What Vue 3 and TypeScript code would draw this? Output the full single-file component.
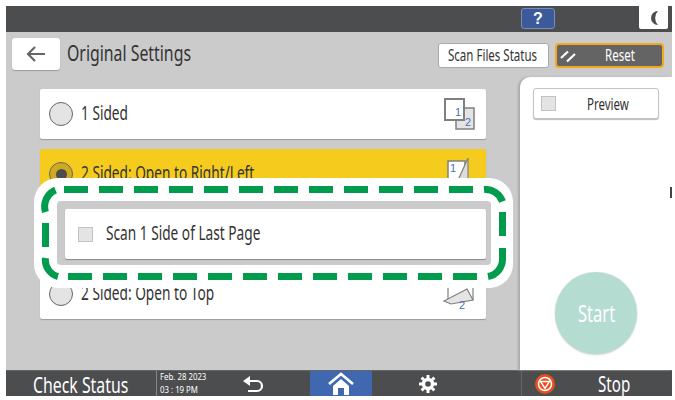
<script setup lang="ts">
interface Original {
  label: string
  selected: boolean
  icon: string
}

const originals: Original[] = [
  { label: '1 Sided', selected: false, icon: 'one' },
  { label: '2 Sided: Open to Right/Left', selected: true, icon: 'book' },
  { label: '', selected: false, icon: '' },
  { label: '2 Sided: Open to Top', selected: false, icon: 'top' },
]

// dashes of the green callout, in page coordinates
const dashes =
  'M64 189.5h24M99 189.5h24M134 189.5h24M169 189.5h24M204 189.5h24M239 189.5h24M274 189.5h24M309 189.5h24M344 189.5h24M379 189.5h24M414 189.5h24M449 189.5h24' +
  'M484 189.5a18 18 0 0 1 18.5 12M502.5 212v24M502.5 248v11a17.500 17.500 0 0 1-14.500 17.500' +
  'M477 276.500h-24M442 276.500h-24M407 276.500h-24M372 276.500h-24M337 276.500h-24M302 276.500h-24M267 276.500h-24M232 276.500h-24M197 276.500h-24M162 276.500h-24M127 276.500h-24M92 276.500h-24' +
  'M58 276.500a17 17 0 0 1-12.500-18.500M45.500 247v-24M45.500 212a18 18 0 0 1 10-22'
</script>

<template>
  <div class="screen">
    <div class="topbar">
      <button class="help">?</button>
      <button class="sleep">
        <svg width="14" height="16" viewBox="0 0 14 16">
          <path d="M11 1A7 7 0 0 0 11 15A10 10 0 0 1 11 1z" fill="#4c4d4f" />
        </svg>
      </button>
    </div>

    <div class="main">
      <div class="head">
        <button class="back">
          <svg width="20" height="16" viewBox="0 0 20 16">
            <path d="M9 1L2 8l7 7M2 8h17" fill="none" stroke="#666" stroke-width="2.200" />
          </svg>
        </button>
        <span class="title"><span class="cond">Original Settings</span></span>
        <button class="scan"><span class="cond">Scan Files Status</span></button>
        <button class="reset">
          <svg width="16" height="14" viewBox="0 0 16 14">
            <path d="M1 9L8 2.500M7 12.500L15 5" stroke="#fff" stroke-width="2.200" fill="none" />
          </svg>
          <span class="reset-label"><span class="cond">Reset</span></span>
        </button>
      </div>

      <div class="body">
        <div class="list">
          <div
            v-for="(o, i) in originals"
            :key="i"
            class="row"
            :class="{ selected: o.selected, blank: !o.label }"
          >
            <template v-if="o.label">
              <span class="radio"><span v-if="o.selected" class="dot"></span></span>
              <span class="row-label"><span class="cond">{{ o.label }}</span></span>
              <svg v-if="o.icon === 'one'" class="paper" width="32" height="32" viewBox="0 0 32 32">
                <rect x="13" y="10" width="18" height="21" fill="#e4e4e4" stroke="#808080" stroke-width="1.500" />
                <rect x="2" y="1" width="19" height="21" fill="#fff" stroke="#808080" stroke-width="2" />
                <text x="15" y="18" class="num">1</text>
                <text x="25" y="28" class="num">2</text>
              </svg>
              <svg v-else-if="o.icon === 'book'" class="paper" width="32" height="32" viewBox="0 0 32 32">
                <rect x="5" y="3" width="17" height="26" fill="#fff" stroke="#808080" stroke-width="1.500" />
                <path d="M25 0L12 29h13z" fill="#ddd" stroke="#808080" stroke-width="1.200" />
                <text x="10" y="14" class="num">1</text>
              </svg>
              <svg v-else class="paper" width="32" height="32" viewBox="0 0 32 32">
                <path d="M5 9v14M30 9v13" stroke="#808080" stroke-width="1.200" fill="none" />
                <path d="M1 23L24 11l6 11-22 4z" fill="#e4e4e4" stroke="#808080" stroke-width="1.200" />
                <text x="19" y="31" class="num">2</text>
              </svg>
            </template>
          </div>
        </div>

        <div class="side">
          <button class="preview">
            <span class="check"></span>
            <span class="preview-label"><span class="cond">Preview</span></span>
          </button>
          <span class="edge-mark"></span>
          <button class="start"><span class="cond">Start</span></button>
        </div>
      </div>

      <!-- callout over the list -->
      <div class="callout">
        <div class="callout-inner">
          <div class="option">
            <span class="check"></span>
            <span class="option-label"><span class="cond">Scan 1 Side of Last Page</span></span>
          </div>
        </div>
      </div>
      <svg class="dash" width="666" height="338" viewBox="6 32 666 338">
        <path :d="dashes" fill="none" stroke="#009b4c" stroke-width="7" />
      </svg>
    </div>

    <div class="footer">
      <div class="status"><span class="cond">Check Status</span></div>
      <div class="date">
        <span class="cond">Feb. 28 2023</span>
        <span class="cond">03 : 19 PM</span>
      </div>
      <div class="cell back-cell">
        <svg width="22" height="18" viewBox="0 0 22 18">
          <path d="M8 1L1 6l7 5z" fill="#fff" />
          <path d="M6 6h9a4.500 4.500 0 0 1 0 10H6" fill="none" stroke="#fff" stroke-width="2.200" />
        </svg>
      </div>
      <div class="cell home">
        <svg width="26" height="24" viewBox="0 0 26 24">
          <path d="M1 12L13 2l12 10" fill="none" stroke="#fff" stroke-width="2.600" />
          <path d="M5 14l8-7 8 7v9h-5v-7h-6v7H5z" fill="#fff" />
        </svg>
      </div>
      <div class="cell gear">
        <svg width="18" height="18" viewBox="0 0 18 18">
          <circle cx="9" cy="9" r="4.500" fill="none" stroke="#fff" stroke-width="3.400" />
          <path d="M9 0v18M0 9h18M2.600 2.600l12.800 12.800M15.400 2.600L2.600 15.400" stroke="#fff" stroke-width="3" stroke-dasharray="3 12" />
        </svg>
      </div>
      <div class="stop">
        <svg width="20" height="20" viewBox="0 0 20 20">
          <circle cx="10" cy="10" r="10" fill="#e5501e" />
          <circle cx="10" cy="10" r="6.500" fill="none" stroke="#fff" stroke-width="1.500" />
          <path d="M5.500 7.500h9L10 14.500z" fill="none" stroke="#fff" stroke-width="1.400" />
        </svg>
        <span class="stop-label"><span class="cond">Stop</span></span>
      </div>
    </div>
  </div>
</template>

<style scoped>
.screen {
  position: relative;
  width: 666px;
  height: 390px;
  margin: 6px 0 0 6px;
  font-family: 'Noto Sans', 'Liberation Sans', sans-serif;
  color: #333;
}

button {
  font-family: inherit;
  padding: 0;
  cursor: pointer;
}

/* the machine's panel font is a condensed one */
.cond {
  display: inline-block;
  white-space: nowrap;
  transform: scaleX(0.72);
  transform-origin: left center;
}

.topbar {
  height: 26px;
  background: #4c4d4f;
  display: flex;
  justify-content: flex-end;
  align-items: flex-start;
  padding-right: 4px;
  box-sizing: border-box;
}

.help {
  width: 34px;
  height: 21px;
  margin: 2px 84px 0 0;
  background: #3a5a9b;
  border: 1px solid #7c8db3;
  border-radius: 3px;
  color: #fff;
  font-size: 16px;
  font-weight: bold;
  font-family: 'Liberation Sans', sans-serif;
}

.sleep {
  width: 29px;
  height: 23px;
  background: #fff;
  border: none;
  border-radius: 0 0 2px 2px;
  display: flex;
  align-items: center;
  justify-content: center;
}

.main {
  position: relative;
  height: 338px;
  background: #cbcbcb;
  display: flex;
  flex-direction: column;
}

.head {
  height: 45px;
  box-sizing: border-box;
  display: flex;
  align-items: flex-start;
  padding: 6px 8px 0 6px;
}

.back {
  width: 48px;
  height: 32px;
  background: #fff;
  border: none;
  border-radius: 3px;
  box-shadow: 0 1px 1px #999;
  display: flex;
  align-items: center;
  justify-content: center;
}

.title {
  margin: 0 0 0 7px;
  font-size: 22px;
  line-height: 28px;
  flex: 1;
}

.scan {
  width: 111px;
  height: 25px;
  margin: 5px 6px 0 0;
  background: #fff;
  border: 1px solid #aaa;
  border-radius: 3px;
  color: #333;
  font-size: 16px;
  display: flex;
  align-items: center;
  padding: 0 0 2px 9px;
  box-sizing: border-box;
}

.reset {
  width: 109px;
  height: 25px;
  margin-top: 5px;
  box-sizing: border-box;
  background: #636463;
  border: 2px solid #f0ab1c;
  border-radius: 4px;
  color: #fff;
  font-size: 16px;
  display: flex;
  align-items: center;
  padding-left: 3px;
}

.reset-label {
  margin: -2px 0 0 29px;
}

.body {
  flex: 1;
  display: flex;
  justify-content: space-between;
}

.list {
  width: 446px;
  margin: 12px 0 0 34px;
  display: flex;
  flex-direction: column;
  gap: 10px;
}

.row {
  height: 50px;
  background: #fff;
  border-radius: 2px;
  box-shadow: 0 1px 1px #999;
  display: flex;
  align-items: center;
  padding: 0 11px 0 9px;
}

.row.selected {
  background: #f5cc1d;
}

.row.blank {
  visibility: hidden;
}

.radio {
  width: 24px;
  height: 24px;
  box-sizing: border-box;
  border: 1.500px solid #666;
  border-radius: 50%;
  background: #e4e4e4;
  display: flex;
  align-items: center;
  justify-content: center;
}

.row.selected .radio {
  background: #cfa920;
}

.dot {
  width: 11px;
  height: 11px;
  border-radius: 50%;
  background: #4c4d4f;
}

.row-label {
  margin: -2px 0 0 8px;
  font-size: 19px;
  flex: 1;
}

.paper {
  flex: none;
}

.num {
  font-family: 'Liberation Sans', sans-serif;
  font-size: 11px;
  fill: #4a6fb5;
  text-anchor: middle;
}

.side {
  position: relative;
  width: 152px;
  background: #fff;
  border-radius: 10px 0 0 0;
  box-shadow: -2px 0 2px #aaa;
  box-sizing: border-box;
  padding: 11px 13px 0;
  display: flex;
  flex-direction: column;
  align-items: flex-start;
}

.preview {
  width: 126px;
  height: 31px;
  background: #fff;
  border: 1px solid #c4c4c4;
  border-radius: 3px;
  box-shadow: 0 1px 1px #bbb;
  display: flex;
  align-items: center;
  padding-left: 7px;
  color: #333;
}

.preview-label {
  margin-left: 31px;
  font-size: 16px;
}

.check {
  width: 15px;
  height: 15px;
  box-sizing: border-box;
  background: #e4e4e4;
  border: 1px solid #c2c2c2;
  flex: none;
}

.edge-mark {
  position: absolute;
  right: 0;
  top: 110px;
  width: 2px;
  height: 11px;
  background: #444;
}

.start {
  width: 82px;
  height: 82px;
  margin: 153px 0 0 22px;
  border: none;
  border-radius: 50%;
  background: #b5dcd0;
  box-shadow: 0 1px 2px #ccc;
  color: #fff;
  font-size: 23px;
  display: flex;
  align-items: center;
  padding-left: 23px;
  box-sizing: border-box;
}

.callout {
  position: absolute;
  left: 28px;
  top: 146px;
  width: 479px;
  height: 110px;
  box-sizing: border-box;
  background: #fff;
  border-radius: 24px;
  padding: 23px 22px 23px 23px;
}

.callout-inner {
  height: 64px;
  background: #cbcbcb;
  border-radius: 4px;
  box-sizing: border-box;
  padding: 8px 5px 0 8px;
}

.option {
  height: 50px;
  background: #fff;
  border-radius: 2px;
  box-shadow: 0 1px 1px #888;
  display: flex;
  align-items: center;
  padding-left: 13px;
}

.option-label {
  margin: -2px 0 0 13px;
  font-size: 19px;
}

.dash {
  position: absolute;
  left: 0;
  top: 0;
  pointer-events: none;
}

.footer {
  height: 26px;
  background: #4c4d4f;
  border-top: 1px solid #666;
  box-sizing: border-box;
  display: flex;
  align-items: center;
  color: #fff;
}

.status {
  width: 150px;
  font-size: 22px;
  box-sizing: border-box;
  padding-left: 27px;
}

.date {
  width: 60px;
  height: 100%;
  border-left: 1px solid #888;
  box-sizing: border-box;
  padding-left: 3px;
  display: flex;
  flex-direction: column;
  justify-content: center;
  font-size: 9px;
  line-height: 12.500px;
}

.date .cond {
  transform: scaleX(0.87);
}

.cell {
  height: 100%;
  display: flex;
  align-items: center;
  justify-content: center;
}

.back-cell {
  width: 94px;
  padding-right: 20px;
  box-sizing: border-box;
}

.home {
  width: 62px;
  background: #3f68b0;
}

.gear {
  width: 149px;
  padding-right: 38px;
  box-sizing: border-box;
}

.stop {
  flex: 1;
  height: 100%;
  border-left: 1px solid #666;
  display: flex;
  align-items: center;
  padding-left: 13px;
  box-sizing: border-box;
}

.stop-label {
  margin-left: 43px;
  font-size: 21px;
}
</style>
